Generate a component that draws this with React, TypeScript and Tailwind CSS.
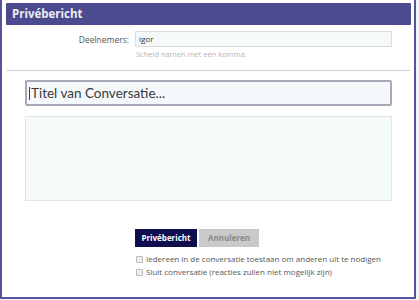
export default function App() {
  return (
    <div className="w-[419px] h-[300px] bg-[#f4f3fa] font-['Open_Sans',sans-serif]">
      <div className="w-[416px] h-[299px] border-2 border-t-0 border-[#55539a] bg-white flex flex-col">
        {/* Header */}
        <div className="mt-[3px] ml-[4px] mr-[3px] h-[22px] bg-[#4b4a8e] flex items-center px-[6px] rounded-[1px]">
          <span className="text-[11.5px] font-bold text-[#ececf5]">Privébericht</span>
        </div>

        {/* Deelnemers */}
        <div className="flex mt-[6px]">
          <label className="w-[128px] text-right pr-[1px] pt-[3px] text-[8.5px] text-[#555]">Deelnemers:</label>
          <div className="ml-[5px] flex flex-col">
            <div className="w-[257px] h-[16px] border border-[#dcdcdc] bg-[#f6f9fa] flex items-center px-[3px] text-[8px] text-[#333]">
              igor
            </div>
            <span className="mt-[2px] text-[7.5px] text-[#b4b4b4] ml-[1px]">Scheid namen met een komma.</span>
          </div>
        </div>

        <div className="mt-[10px] ml-[5px] mr-[4px] h-px bg-[#cfcfcf]" />

        {/* Title + message */}
        <div className="pl-[23px] pr-[22px] pt-[9px] flex flex-col gap-[10px]">
          <div className="h-[26px] border-2 border-[#a9a8b8] rounded-[2px] bg-[#f5f8fa] flex items-center pl-[2px] text-[13.5px] text-[#3a3a3a] font-['Lato',sans-serif]">
            <span className="border-l border-[#444] pl-[1px] leading-none">Titel van Conversatie...</span>
          </div>
          <div className="h-[85px] border border-[#e2e4e6] bg-[#f5fafb]" />
        </div>

        {/* Actions */}
        <div className="pl-[133px] mt-[28px] flex gap-[2px]">
          <button className="w-[62px] h-[18px] bg-[#100d4f] text-white text-[8px] font-bold">Privébericht</button>
          <button className="w-[60px] h-[18px] bg-[#c9c9c9] text-[#8a8a8a] text-[8px] font-bold">Annuleren</button>
        </div>
        <div className="pl-[134px] mt-[8px] flex flex-col gap-[5px] text-[8px] text-[#555]">
          <label className="flex items-center gap-[3px] leading-none">
            <span className="w-[7px] h-[7px] border border-[#bbb] rounded-[1px] bg-[#eee]" />
            Iedereen in de conversatie toestaan om anderen uit te nodigen
          </label>
          <label className="flex items-center gap-[3px] leading-none">
            <span className="w-[7px] h-[7px] border border-[#bbb] rounded-[1px] bg-[#eee]" />
            Sluit conversatie (reacties zullen niet mogelijk zijn)
          </label>
        </div>
      </div>
    </div>
  );
}
